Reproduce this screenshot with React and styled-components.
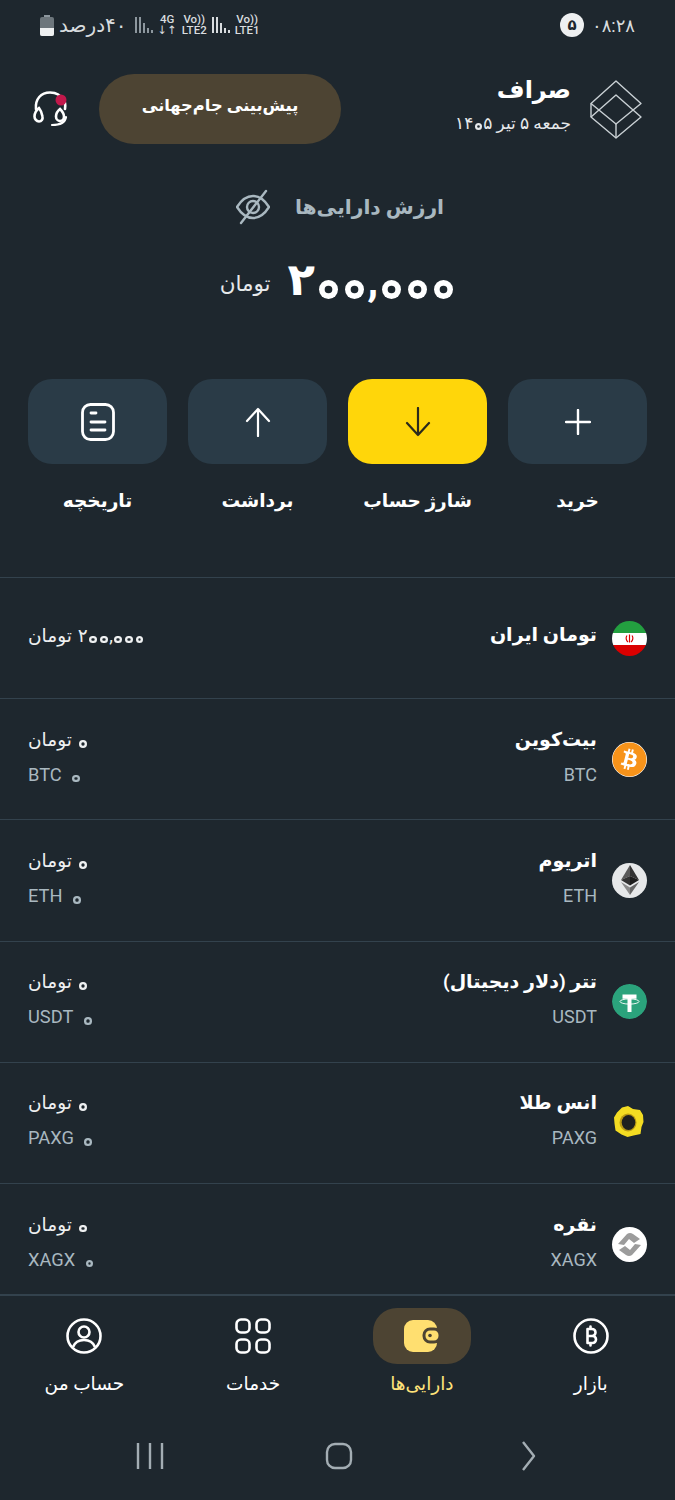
import React from 'react';
import styled, { createGlobalStyle } from 'styled-components';
import { FaBitcoin } from 'react-icons/fa';

const GlobalStyle = createGlobalStyle`
  html, body {
    margin: 0;
    padding: 0;
    background: #1e272e;
  }
  * {
    box-sizing: border-box;
  }
`

const Page = styled.div`
  width: 675px;
  height: 1500px;
  display: flex;
  flex-direction: column;
  overflow: hidden;
  direction: rtl;
  background: #1e272e;
  color: #fff;
  font-family: Roboto, "DejaVu Sans", sans-serif;
`

// the app's Persian zero is a small ring, DejaVu only has a dot for it
const Zero = styled.span`
  display: inline-block;
  font-size: 0.42em;
  width: 1em;
  height: 1em;
  margin: 0 0.19em;
  line-height: 1em;
  text-align: center;
  border-radius: 50%;
  box-shadow: inset 0 0 0 0.3em currentColor;
  -webkit-text-fill-color: transparent;
`

const NumberText = styled.span`
  display: inline-block;
  direction: ltr;
`

const Digits = ({ value }) => (
  <NumberText>
    {value.split('').map((ch, i) => (ch === '۰' ? <Zero key={i}>{ch}</Zero> : ch))}
  </NumberText>
);

const StatusBar = styled.div`
  height: 48px;
  flex: none;
  display: flex;
  align-items: center;
  justify-content: space-between;
  padding: 2px 40px 0;
  color: #d8dcdf;
`

const StatusGroup = styled.div`
  display: flex;
  align-items: center;
  gap: ${p => p.$gap || 8}px;
`

const Clock = styled.span`
  font-size: 18px;
`

const Badge = styled.span`
  width: 24px;
  height: 24px;
  border-radius: 50%;
  background: #eef0f1;
  color: #1e272e;
  display: flex;
  align-items: center;
  justify-content: center;
  font-size: 15px;
  font-weight: 700;
`

const BatteryText = styled.span`
  font-size: 20px;
  margin-right: 3px;
`

const Network = styled.span`
  display: flex;
  flex-direction: column;
  align-items: center;
  direction: ltr;
  font-size: 11.5px;
  line-height: 11px;
  font-weight: 500;
`

const Header = styled.header`
  height: 96px;
  flex: none;
  display: flex;
  align-items: center;
  padding: 0 33px 0 32px;
  margin-top: 13px;
`

const Brand = styled.div`
  display: flex;
  align-items: center;
  gap: 19px;
  flex: 1;
`

const BrandText = styled.div`
  display: flex;
  flex-direction: column;
  gap: 6px;
  margin-top: -10px;
`

const BrandName = styled.div`
  font-size: 24px;
  line-height: 32px;
  font-weight: 700;
`

const BrandDate = styled.div`
  font-size: 17px;
  line-height: 22px;
  color: #e6e9eb;
`

const Promo = styled.button`
  width: 242px;
  height: 70px;
  border: 0;
  border-radius: 35px;
  padding: 0 0 7px;
  background: #4d4433;
  color: #fff;
  font-family: inherit;
  font-size: 16.3px;
  font-weight: 700;
  margin-left: 31px;
`

const Balance = styled.section`
  flex: none;
  display: flex;
  flex-direction: column;
  align-items: center;
  padding: 28px 0 0 1px;
  height: 222px;
`

const BalanceLabel = styled.div`
  display: flex;
  align-items: center;
  gap: 25px;
  margin-left: 4px;
  font-size: 20.3px;
  line-height: 44px;
  font-weight: 700;
  color: #a9b8c0;
`

const BalanceValue = styled.div`
  display: flex;
  align-items: center;
  gap: 17px;
  margin-top: 21px;
`

const BalanceAmount = styled.span`
  font-size: 45px;
  line-height: 60px;
  font-weight: 700;
`

const BalanceUnit = styled.span`
  font-size: 21.5px;
  margin-top: 6px;
  color: #e6e9eb;
`

const Actions = styled.section`
  flex: none;
  display: grid;
  grid-template-columns: repeat(4, 139px);
  column-gap: 21px;
  justify-content: center;
  height: 198px;
`

const Action = styled.div`
  display: flex;
  flex-direction: column;
  align-items: center;
`

const ActionTile = styled.div`
  width: 139px;
  height: 85px;
  border-radius: 24px;
  display: flex;
  align-items: center;
  justify-content: center;
  background: ${p => (p.$primary ? '#ffd60a' : '#2a3b47')};
`

const ActionLabel = styled.div`
  margin-top: 20px;
  font-size: 18.5px;
  line-height: 34px;
  font-weight: 700;
  white-space: nowrap;
`

const AssetList = styled.section`
  flex: 1;
  min-height: 0;
  overflow: hidden;
`

const AssetRow = styled.div`
  height: 121.2px;
  border-top: 1px solid #33424d;
  display: flex;
  align-items: center;
  padding: 0 28px;
`

const AssetIcon = styled.div`
  width: 35px;
  height: 35px;
  flex: none;
  border-radius: 50%;
  overflow: hidden;
  display: flex;
  align-items: center;
  justify-content: center;
  background: ${p => p.$bg || 'transparent'};
`

const AssetName = styled.div`
  flex: 1;
  margin: 0 15px 7px 0;
  display: flex;
  flex-direction: column;
  gap: 10px;
`

const AssetTitle = styled.div`
  font-size: 19px;
  line-height: 28px;
  font-weight: 700;
`

const AssetCode = styled.div`
  font-size: 18px;
  line-height: 22px;
  color: #a9b8c0;
`

const AssetValue = styled.div`
  display: flex;
  flex-direction: column;
  gap: 12px;
  align-items: flex-end;
  margin-bottom: 5px;
`

const AssetAmount = styled.div`
  display: flex;
  align-items: baseline;
  gap: 6px;
  font-size: 18.5px;
  line-height: 24px;
  color: #eef0f1;
`

const AssetHolding = styled.div`
  display: flex;
  align-items: baseline;
  gap: 9px;
  font-size: 18.3px;
  line-height: 22px;
  color: #a9b8c0;
`

const BottomNav = styled.nav`
  flex: none;
  height: 123px;
  border-top: 2px solid #33424d;
  display: grid;
  grid-template-columns: repeat(4, 1fr);
  padding: 12px 0 0;
`

const NavItem = styled.div`
  display: flex;
  flex-direction: column;
  align-items: center;
  color: ${p => (p.$active ? '#ffe27a' : '#fff')};
`

const NavIcon = styled.div`
  width: 98px;
  height: 56px;
  border-radius: 24px;
  display: flex;
  align-items: center;
  justify-content: center;
  background: ${p => (p.$active ? '#4d4433' : 'transparent')};
`

const NavLabel = styled.div`
  margin-top: 7px;
  font-size: 18.5px;
  line-height: 26px;
`

const SystemNav = styled.div`
  flex: none;
  height: 83px;
  display: grid;
  grid-template-columns: repeat(3, 189px);
  justify-content: center;
  justify-items: center;
  align-items: start;
  padding: 24px 0 0 3px;
`

const Signal = ({ dim }) => (
  <svg width="18" height="16" viewBox="0 0 18 16" fill={dim ? '#8d979e' : '#d8dcdf'}>
    <rect x="0" y="0" width="2" height="16" />
    <rect x="4" y="0" width="2" height="16" />
    <rect x="8" y="6" width="2" height="10" />
    <rect x="12" y="11" width="2" height="5" />
    <rect x="16" y="13" width="2" height="3" />
  </svg>
);

const Battery = () => (
  <svg width="14" height="21" viewBox="0 0 14 21">
    <rect x="4" y="0" width="6" height="2" fill="#8d979e" />
    <rect x="0" y="2" width="14" height="19" rx="2" fill="#6d767c" />
    <path d="M0 13h14v6a2 2 0 0 1-2 2H2a2 2 0 0 1-2-2z" fill="#eef0f1" />
  </svg>
);

const Logo = () => (
  <svg width="52" height="59" viewBox="0 0 52 59" fill="none" stroke="#c9d0d4" strokeWidth="1.4" strokeLinejoin="round">
    <path d="M26 1 51 23.500 26 44 1 23.500z" />
    <path d="M26 15 51 37 26 58 1 37z" />
    <path d="M1 23.500V37M26 44v14" />
  </svg>
);

const Headset = () => (
  <svg width="36" height="36" viewBox="0 0 36 36" fill="none" stroke="#fff" strokeWidth="2.600" strokeLinecap="round">
    <path d="M4 18C3 8 9 1.500 18 1.500c6 0 11 3 13 8" />
    <path d="M33 18c.4-2 .3-4 0-6" />
    <path d="M7 17c-2.500 2-4.500 6-4.500 8.500 0 2.500 2 5 4.500 5s4-2.500 3.500-5c-.4-2.500-1.500-6-3.500-8.500z" />
    <path d="M28 18c-2.500 2-4 5-4 7.500s2 4.500 4 4.500 4-2 4-4.500-2-5.500-4-7.500z" />
    <path d="M34 26c-1 6-7 8-14 8" strokeWidth="2.200" />
    <circle cx="29" cy="9" r="5.500" fill="#c2184b" stroke="none" />
  </svg>
);

const EyeOff = () => (
  <svg width="34" height="36" viewBox="0 0 34 36" fill="none" stroke="#a9b8c0" strokeWidth="2.400" strokeLinecap="round" strokeLinejoin="round">
    <path d="M1 18C6 10 11 7 17 7s11 3 16 11c-5 8-10 11-16 11S6 26 1 18z" />
    <circle cx="17" cy="18" r="6" />
    <path d="M30 2 5 34" />
  </svg>
);

const Plus = () => (
  <svg width="26" height="26" viewBox="0 0 26 26" stroke="#fff" strokeWidth="2.400" strokeLinecap="round">
    <path d="M13 1v24M1 13h24" />
  </svg>
);

const Arrow = ({ up, color }) => (
  <svg width="26" height="30" viewBox="0 0 26 30" fill="none" stroke={color} strokeWidth="2.200" strokeLinecap="round" strokeLinejoin="round">
    {up ? <path d="M13 29V2M2 14 13 2l11 12" /> : <path d="M13 1v27M2 16l11 12 11-12" />}
  </svg>
);

const History = () => (
  <svg width="34" height="38" viewBox="0 0 34 38" fill="none" stroke="#fff" strokeWidth="2.800" strokeLinecap="round">
    <rect x="1.500" y="1.500" width="31" height="35" rx="8" />
    <path d="M10 10h5M10 19h14M10 27h14" />
  </svg>
);

const IranFlag = () => (
  <svg width="35" height="35" viewBox="0 0 35 35">
    <rect width="35" height="12" fill="#239f40" />
    <rect y="12" width="35" height="12" fill="#fff" />
    <rect y="24" width="35" height="11" fill="#da0000" />
    <path d="M17.500 13.500v8M15 14.500c-1.500 2-1 5 1 6.500M20 14.500c1.500 2 1 5-1 6.500" fill="none" stroke="#da0000" strokeWidth="1.200" />
  </svg>
);

const Ethereum = () => (
  <svg width="18" height="30" viewBox="0 0 18 30">
    <path d="M9 0 0 15l9-4z" fill="#5a5a5a" />
    <path d="M9 0l9 15-9-4z" fill="#333" />
    <path d="M0 15l9 5.500V11z" fill="#333" />
    <path d="M18 15l-9 5.500V11z" fill="#1c1c1c" />
    <path d="M0 17l9 13v-7.500z" fill="#8a8a8a" />
    <path d="M18 17 9 30v-7.500z" fill="#666" />
  </svg>
);

const Tether = () => (
  <svg width="35" height="35" viewBox="0 0 35 35">
    <circle cx="17.500" cy="17.500" r="17.500" fill="#2ba37c" />
    <ellipse cx="17.500" cy="17.500" rx="9.500" ry="2.600" fill="none" stroke="#fff" strokeWidth="0.900" />
    <path d="M10.500 10.500h14v4.200h-5v13.300h-4V14.700h-5z" fill="#fff" />
  </svg>
);

const Pax = () => (
  <svg width="35" height="35" viewBox="0 0 35 35">
    <path d="M10 2.500 16 1l5 3 7 1 3 5 .5 7-2 5-1 7-7 1.500-6 1.500-6-2.500-6-4-1-7-.5-6 3-5z" fill="#f3dc22" />
    <ellipse cx="16" cy="17.500" rx="8.500" ry="9" fill="#b99a14" />
    <ellipse cx="16.500" cy="17.500" rx="6.800" ry="7.500" fill="#1d1f1f" />
  </svg>
);

const Silver = () => (
  <svg width="35" height="35" viewBox="0 0 35 35" fill="#9c9c9c">
    <path d="M6 17 15 7q3-2 6 0l7 5-6 4-5-4-5 6z" />
    <path d="M6 17 15 7q3-2 6 0l7 5-6 4-5-4-5 6z" transform="rotate(180 17.500 17.500)" />
  </svg>
);

const BitcoinNav = () => (
  <svg width="36" height="36" viewBox="0 0 36 36" fill="none" stroke="#fff" strokeWidth="2.600" strokeLinecap="round" strokeLinejoin="round">
    <circle cx="18" cy="18" r="16.500" />
    <path d="M14.500 11h4.500a3.500 3.500 0 0 1 0 7h-4.500zM14.500 18h5a3.500 3.500 0 0 1 0 7h-5zM17.500 8.500V11M17.500 25v2.500" />
  </svg>
);

const Wallet = () => (
  <svg width="36" height="32" viewBox="0 0 36 32">
    <rect width="33" height="32" rx="9" fill="#ffdf70" />
    <rect x="20" y="9" width="16" height="13" rx="6" fill="#ffdf70" stroke="#4d4433" strokeWidth="3" />
    <circle cx="26" cy="15.500" r="1.800" fill="#4d4433" />
  </svg>
);

const Services = () => (
  <svg width="36" height="36" viewBox="0 0 36 36" fill="none" stroke="#fff" strokeWidth="2.600">
    <rect x="1.500" y="1.500" width="13" height="13" rx="4.500" />
    <rect x="21.500" y="1.500" width="13" height="13" rx="4.500" />
    <rect x="1.500" y="21.500" width="13" height="13" rx="4.500" />
    <rect x="21.500" y="21.500" width="13" height="13" rx="4.500" />
  </svg>
);

const Account = () => (
  <svg width="36" height="36" viewBox="0 0 36 36" fill="none" stroke="#fff" strokeWidth="2.600">
    <circle cx="18" cy="18" r="16.500" />
    <circle cx="18" cy="14" r="5.500" />
    <path d="M7 29c2-5 6-7 11-7s9 2 11 7" />
  </svg>
);

const SystemIcon = ({ children }) => (
  <svg width="30" height="30" viewBox="0 0 30 30" fill="none" stroke="#a3adb3" strokeWidth="2.400" strokeLinejoin="round">
    {children}
  </svg>
);

const assets = [
  { name: 'بیت‌کوین', code: 'BTC', bg: '#fff', icon: <FaBitcoin size={35} color="#f7931a" /> },
  { name: 'اتریوم', code: 'ETH', bg: '#e6e8e9', icon: <Ethereum /> },
  { name: 'تتر (دلار دیجیتال)', code: 'USDT', icon: <Tether /> },
  { name: 'انس طلا', code: 'PAXG', icon: <Pax /> },
  { name: 'نقره', code: 'XAGX', bg: '#fff', icon: <Silver /> },
];

const actions = [
  { label: 'خرید', icon: <Plus /> },
  { label: 'شارژ حساب', primary: true, icon: <Arrow color="#2b2a1c" /> },
  { label: 'برداشت', icon: <Arrow up color="#fff" /> },
  { label: 'تاریخچه', icon: <History /> },
];

const navItems = [
  { label: 'بازار', icon: <BitcoinNav /> },
  { label: 'دارایی‌ها', active: true, icon: <Wallet /> },
  { label: 'خدمات', icon: <Services /> },
  { label: 'حساب من', icon: <Account /> },
];

const App = () => {
  return (
    <Page>
      <GlobalStyle />
      <StatusBar>
        <StatusGroup>
          <Clock>۰۸:۲۸</Clock>
          <Badge>۵</Badge>
        </StatusGroup>
        <StatusGroup $gap={5}>
          <Network><span>Vo))</span><span>LTE1</span></Network>
          <Signal />
          <Network><span>Vo))</span><span>LTE2</span></Network>
          <Network><span>4G</span><span>↓↑</span></Network>
          <Signal dim />
          <BatteryText>۴۰درصد</BatteryText>
          <Battery />
        </StatusGroup>
      </StatusBar>

      <Header>
        <Brand>
          <Logo />
          <BrandText>
            <BrandName>صراف</BrandName>
            <BrandDate>جمعه ۵ تیر <Digits value="۱۴۰۵" /></BrandDate>
          </BrandText>
        </Brand>
        <Promo>پیش‌بینی جام‌جهانی</Promo>
        <Headset />
      </Header>

      <Balance>
        <BalanceLabel>
          ارزش دارایی‌ها
          <EyeOff />
        </BalanceLabel>
        <BalanceValue>
          <BalanceAmount><Digits value="۲۰۰,۰۰۰" /></BalanceAmount>
          <BalanceUnit>تومان</BalanceUnit>
        </BalanceValue>
      </Balance>

      <Actions>
        {actions.map(a => (
          <Action key={a.label}>
            <ActionTile $primary={a.primary}>{a.icon}</ActionTile>
            <ActionLabel>{a.label}</ActionLabel>
          </Action>
        ))}
      </Actions>

      <AssetList>
        <AssetRow>
          <AssetIcon><IranFlag /></AssetIcon>
          <AssetName>
            <AssetTitle>تومان ایران</AssetTitle>
          </AssetName>
          <AssetValue>
            <AssetAmount><Digits value="۲۰۰,۰۰۰" /> تومان</AssetAmount>
          </AssetValue>
        </AssetRow>
        {assets.map(a => (
          <AssetRow key={a.code}>
            <AssetIcon $bg={a.bg}>{a.icon}</AssetIcon>
            <AssetName>
              <AssetTitle>{a.name}</AssetTitle>
              <AssetCode>{a.code}</AssetCode>
            </AssetName>
            <AssetValue>
              <AssetAmount><Digits value="۰" /> تومان</AssetAmount>
              <AssetHolding><Digits value="۰" /> {a.code}</AssetHolding>
            </AssetValue>
          </AssetRow>
        ))}
      </AssetList>

      <BottomNav>
        {navItems.map(n => (
          <NavItem key={n.label} $active={n.active}>
            <NavIcon $active={n.active}>{n.icon}</NavIcon>
            <NavLabel>{n.label}</NavLabel>
          </NavItem>
        ))}
      </BottomNav>

      <SystemNav>
        <SystemIcon><path d="M10 1l11 14-11 14" /></SystemIcon>
        <SystemIcon><rect x="3" y="3" width="24" height="24" rx="8" /></SystemIcon>
        <SystemIcon><path d="M3 2v26M15 2v26M27 2v26" /></SystemIcon>
      </SystemNav>
    </Page>
  );
}

export default App;
